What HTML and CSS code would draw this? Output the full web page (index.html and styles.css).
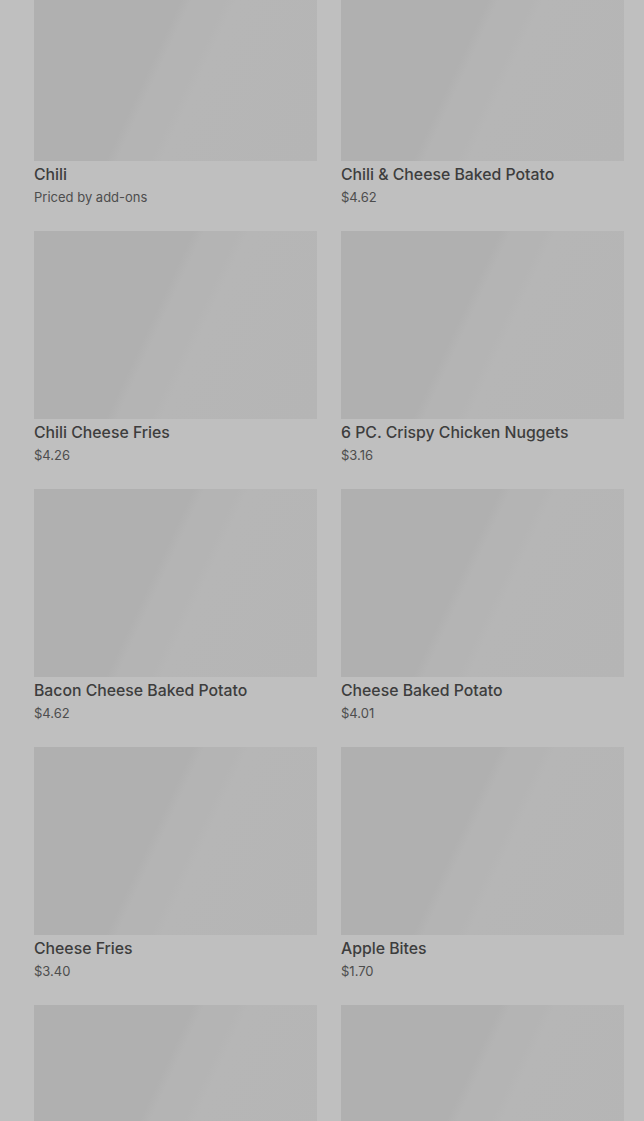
FILE: index.html
```html
<!DOCTYPE html>
<html lang="en">
<head>
<meta charset="utf-8">
<title>Menu</title>
<link rel="stylesheet" href="styles.css">
</head>
<body>
<main class="menu">
  <div class="grid">
    <article class="card"><div class="thumb"></div><h3 class="name">Chili</h3><p class="price">Priced by add-ons</p></article>
    <article class="card"><div class="thumb"></div><h3 class="name">Chili &amp; Cheese Baked Potato</h3><p class="price">$4.62</p></article>
    <article class="card"><div class="thumb"></div><h3 class="name">Chili Cheese Fries</h3><p class="price">$4.26</p></article>
    <article class="card"><div class="thumb"></div><h3 class="name">6 PC. Crispy Chicken Nuggets</h3><p class="price">$3.16</p></article>
    <article class="card"><div class="thumb"></div><h3 class="name">Bacon Cheese Baked Potato</h3><p class="price">$4.62</p></article>
    <article class="card"><div class="thumb"></div><h3 class="name">Cheese Baked Potato</h3><p class="price">$4.01</p></article>
    <article class="card"><div class="thumb"></div><h3 class="name">Cheese Fries</h3><p class="price">$3.40</p></article>
    <article class="card"><div class="thumb"></div><h3 class="name">Apple Bites</h3><p class="price">$1.70</p></article>
    <article class="card"><div class="thumb"></div><h3 class="name"></h3><p class="price"></p></article>
    <article class="card"><div class="thumb"></div><h3 class="name"></h3><p class="price"></p></article>
  </div>
</main>
</body>
</html>
```
FILE: styles.css
```css
html, body {
  margin: 0;
  padding: 0;
  background: #bfbfbf;
  overflow: hidden;
}
body {
  font-family: Inter, "Noto Sans", "Liberation Sans", sans-serif;
}
.menu {
  padding: 0 20px 0 34px;
}
.grid {
  margin-top: -27px;
  display: grid;
  grid-template-columns: 1fr 1fr;
  column-gap: 24px;
  row-gap: 24px;
}
.thumb {
  height: 188px;
  background: linear-gradient(115deg, #b0b0b0 0%, #b0b0b0 43%, #b4b4b4 46%, #b4b4b4 55%, #b6b6b6 58%, #b5b5b5 100%);
}
.name {
  margin: 2px 0 0;
  font-size: 15.8px;
  line-height: 24px;
  font-weight: 500;
  color: #3d3d3d;
  height: 24px;
}
.price {
  margin: 0;
  font-size: 13px;
  line-height: 20px;
  color: #4d4d4d;
  height: 20px;
}
```
